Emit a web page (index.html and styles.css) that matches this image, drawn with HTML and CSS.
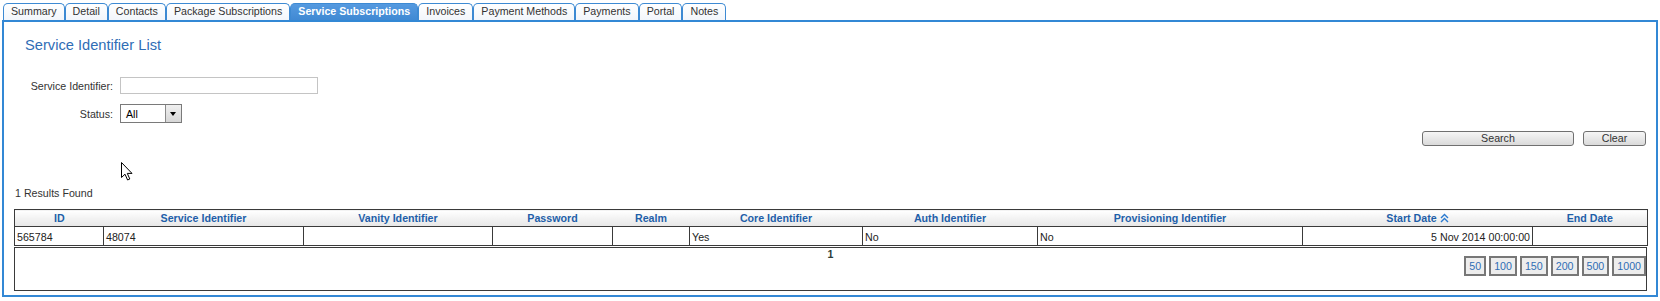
FILE: index.html
```html
<!DOCTYPE html>
<html lang="en">
<head>
    <meta charset="UTF-8">
    <title>Service Subscriptions</title>
    <link rel="stylesheet" href="styles.css">
</head>
<body>
<div class="tabs">
    <span class="tab">Summary</span>
    <span class="tab">Detail</span>
    <span class="tab">Contacts</span>
    <span class="tab">Package Subscriptions</span>
    <span class="tab current">Service Subscriptions</span>
    <span class="tab">Invoices</span>
    <span class="tab">Payment Methods</span>
    <span class="tab">Payments</span>
    <span class="tab">Portal</span>
    <span class="tab">Notes</span>
</div>
<div class="panel">
    <h1 class="title">Service Identifier List</h1>
    <!--查询条件-->
    <div class="filters">
        <label class="filter-label" for="sid">Service Identifier:</label>
        <input class="text-input" id="sid" type="text">
        <label class="filter-label">Status:</label>
        <div class="select">
            <span class="select-value">All</span>
            <span class="select-arrow"></span>
        </div>
    </div>
    <div class="actions">
        <button class="btn btn-search">Search</button>
        <button class="btn btn-clear">Clear</button>
    </div>
    <div class="results-count">1 Results Found</div>
    <!--结果表格-->
    <table class="grid">
        <thead>
        <tr>
            <th class="c-id">ID</th>
            <th class="c-sid">Service Identifier</th>
            <th class="c-vanity">Vanity Identifier</th>
            <th class="c-pass">Password</th>
            <th class="c-realm">Realm</th>
            <th class="c-core">Core Identifier</th>
            <th class="c-auth">Auth Identifier</th>
            <th class="c-prov">Provisioning Identifier</th>
            <th class="c-start">Start Date <svg class="sort-icon" width="9" height="10" viewBox="0 0 9 10"><polyline points="1,5 4.5,1.5 8,5"/><polyline points="1,9 4.5,5.5 8,9"/></svg></th>
            <th class="c-end">End Date</th>
        </tr>
        </thead>
        <tbody>
        <tr>
            <td>565784</td>
            <td>48074</td>
            <td></td>
            <td></td>
            <td></td>
            <td>Yes</td>
            <td>No</td>
            <td>No</td>
            <td class="num">5 Nov 2014 00:00:00</td>
            <td></td>
        </tr>
        </tbody>
    </table>
    <!--分页-->
    <div class="pager">
        <div class="page-current">1</div>
        <div class="page-sizes">
            <span class="page-size">50</span>
            <span class="page-size">100</span>
            <span class="page-size">150</span>
            <span class="page-size">200</span>
            <span class="page-size">500</span>
            <span class="page-size">1000</span>
        </div>
    </div>
</div>
<svg class="cursor" width="13" height="20" viewBox="0 0 13 20">
    <path d="M0.5,0.5 L0.5,15.5 L4,12.2 L6.6,18 L8.8,17 L6.3,11.4 L11,11.4 Z"/>
</svg>
</body>
</html>
```

FILE: styles.css
```css
* {
    padding: 0;
    margin: 0;
    box-sizing: border-box;
}

body {
    font-family: "Liberation Sans", Arial, sans-serif;
    font-size: 8pt;
    color: #333;
    background: #fff;
    position: relative;
}

.tabs {
    display: flex;
    align-items: flex-end;
    padding: 3px 0 0 3px;
}

.tab {
    height: 17px;
    line-height: 14px;
    padding: 0 7px 2px;
    border: 1px solid #3d8ad3;
    border-bottom: 0;
    border-radius: 5px 5px 0 0;
    background: linear-gradient(#fff, #f2f6fb);
    color: #333;
    white-space: nowrap;
}

.tab.current {
    background: linear-gradient(#559ae0, #4089d3);
    color: #fff;
    font-weight: bold;
}

.panel {
    margin: 0 2px;
    border: 2px solid #3388d5;
    padding-bottom: 4px;
}

.title {
    margin: 15px 0 0 21px;
    font-size: 11pt;
    font-weight: normal;
    line-height: 17px;
    color: #2f6db5;
}

.filters {
    display: grid;
    grid-template-columns: 109px auto;
    column-gap: 7px;
    row-gap: 10px;
    align-items: center;
    margin-top: 23px;
}

.filter-label {
    text-align: right;
    color: #333;
}

.text-input {
    width: 198px;
    height: 17px;
    border: 1px solid #c4c4c4;
    outline: none;
    font: inherit;
}

.select {
    display: flex;
    width: 62px;
    height: 19px;
    border: 1px solid #7a7a7a;
    background: #fff;
}

.select-value {
    flex: 1;
    padding-left: 5px;
    line-height: 18px;
    color: #000;
}

.select-arrow {
    width: 16px;
    border-left: 1px solid #8a8a8a;
    background: linear-gradient(#f0f0f0, #d6d6d6);
    position: relative;
}

.select-arrow:after {
    content: "";
    position: absolute;
    left: 4px;
    top: 7px;
    border-left: 3.5px solid transparent;
    border-right: 3.5px solid transparent;
    border-top: 4px solid #000;
}

.actions {
    display: flex;
    justify-content: flex-end;
    gap: 9px;
    margin: 8px 10px 0 0;
}

.btn {
    height: 15px;
    border: 1px solid #707070;
    border-radius: 3px;
    background: linear-gradient(#f6f6f6, #dadada);
    font: inherit;
    line-height: 13px;
    color: #333;
}

.btn-search {
    width: 152px;
}

.btn-clear {
    width: 63px;
}

.results-count {
    margin: 41px 0 0 11px;
    line-height: 12px;
}

.grid {
    margin: 10px 0 0 10px;
    width: 1633px;
    table-layout: fixed;
    border-collapse: collapse;
}

.grid th {
    height: 17px;
    padding: 0;
    border-top: 1px solid #3a3a3a;
    border-bottom: 1px solid #3a3a3a;
    background: linear-gradient(#fff, #e6e6e6);
    color: #1f5fa9;
    font-weight: bold;
    text-align: center;
    white-space: nowrap;
}

.grid th:first-child {
    border-left: 1px solid #3a3a3a;
}

.grid th:last-child {
    border-right: 1px solid #3a3a3a;
}

.grid td {
    height: 19px;
    padding: 2px 2px 0;
    border: 1px solid #3a3a3a;
    color: #222;
    white-space: nowrap;
}

.grid td.num {
    text-align: right;
}

.sort-icon {
    vertical-align: -1px;
    fill: none;
    stroke: #2a7ad0;
    stroke-width: 1.4;
}

.c-id { width: 89px; }
.c-sid { width: 200px; }
.c-vanity { width: 189px; }
.c-pass { width: 120px; }
.c-realm { width: 77px; }
.c-core { width: 173px; }
.c-auth { width: 175px; }
.c-prov { width: 265px; }
.c-start { width: 230px; }
.c-end { width: 115px; }

.pager {
    margin: 1px 9px 0 10px;
    height: 44px;
    border: 1px solid #3a3a3a;
}

.page-current {
    text-align: center;
    line-height: 12px;
    font-weight: bold;
    color: #2c3e3a;
}

.page-sizes {
    display: flex;
    justify-content: flex-end;
    gap: 3px;
    margin-top: -4px;
}

.page-size {
    height: 20px;
    padding: 0 3px;
    line-height: 16px;
    border: 2px solid #777;
    background: #ededed;
    color: #2f6db5;
    cursor: pointer;
}

.cursor {
    position: absolute;
    left: 121px;
    top: 162px;
    fill: #fff;
    stroke: #000;
    stroke-width: 1;
}
```
